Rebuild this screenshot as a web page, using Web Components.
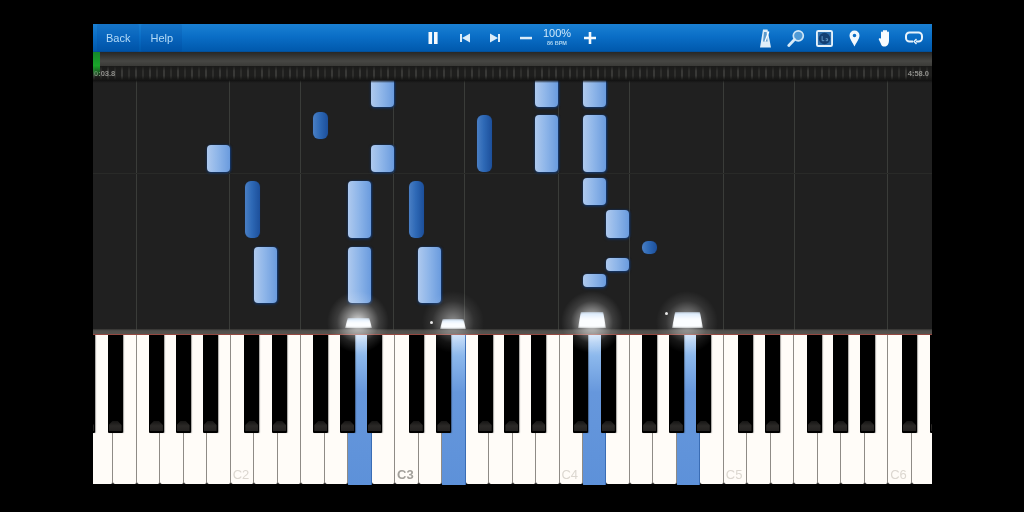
<!doctype html>
<html>
<head>
<meta charset="utf-8">
<style>
  html, body { margin:0; height:100%; background:#000; overflow:hidden; }
  body { padding:24px 92px 0 93px; box-sizing:border-box; font-family:"Liberation Sans", Arial, sans-serif; }
</style>
</head>
<body>
<synth-app>
  <synth-toolbar></synth-toolbar>
  <synth-timeline start="0:03.8" end="4:58.0"></synth-timeline>
  <note-roll></note-roll>
  <piano-keys></piano-keys>
</synth-app>
<script>
// key geometry, px relative to the app's left edge
const WHITE_W = 23.49;
const FIRST_WHITE = -3.2;
const OCTAVE = 164.4;
const C2_X = 137;
// x, strength of the light above each sounding key (page px)
const GLOWS = [[358, .85], [453, .5], [592, .85], [687, .6]];
const glowFill = (a) => `radial-gradient(closest-side, rgba(255,255,255,${a}), rgba(255,255,255,${a * .55}) 35%, rgba(255,255,255,${a * .15}) 68%, transparent)`;

class SynthApp extends HTMLElement {
  constructor() {
    super();
    this.attachShadow({ mode: 'open' });
    this.shadowRoot.innerHTML = `
      <style>
        :host { display:flex; flex-direction:column; width:839px; height:461px; overflow:hidden; filter:blur(.5px); }
      </style>
      <slot></slot>`;
  }
}
customElements.define('synth-app', SynthApp);

class SynthToolbar extends HTMLElement {
  constructor() {
    super();
    this.attachShadow({ mode: 'open' });
    this.shadowRoot.innerHTML = `
      <style>
        :host { display:grid; grid-template-columns:1fr auto 1fr; align-items:center; height:28px; flex:none;
          background:linear-gradient(#1a80d3, #0a6ec6 45%, #0059ad 96%, #064a8c); color:#fff; }
        .left { display:flex; gap:2px; padding-left:4px; height:28px; }
        .btn { display:flex; align-items:center; padding:0 9px; font-size:11px; color:#b4dbf7; background:rgba(0,50,130,.13); border-radius:2px; }
        .center { display:flex; align-items:center; height:28px; margin-left:-2px; }
        .center svg { display:block; }
        .tempo { display:flex; flex-direction:column; align-items:center; width:38px; line-height:1; margin-top:-1px; }
        .pct { font-size:11px; color:#cfe8fa; }
        .bpm { font-size:5.500px; font-weight:bold; color:#a9d2ef; margin-top:2px; }
        .right { display:flex; justify-content:flex-end; align-items:center; padding-right:3px; }
        .ico { width:30px; height:28px; display:flex; align-items:center; justify-content:center; }
        .ico svg { display:block; }
      </style>
      <div class="left"><div class="btn">Back</div><div class="btn">Help</div></div>
      <div class="center">
        <svg width="24" height="28" viewBox="0 0 24 28" style="margin-right:8px"><path d="M7.500 8h3.600v12H7.500zM13 8h3.600v12H13z" fill="#f4f9fd"/></svg>
        <svg width="24" height="28" viewBox="0 0 24 28" style="margin-right:6px"><path d="M7 10h2v8H7zM9 14l8-4.500v9z" fill="#dcecf8"/></svg>
        <svg width="24" height="28" viewBox="0 0 24 28" style="margin-right:7px"><path d="M17 10h-2v8h2zM15 14L7 9.500v9z" fill="#dcecf8"/></svg>
        <svg width="24" height="28" viewBox="0 0 24 28"><path d="M6 12.800h12v2.500H6z" fill="#dcecf8"/></svg>
        <div class="tempo"><span class="pct">100%</span><span class="bpm">86 BPM</span></div>
        <svg width="24" height="28" viewBox="0 0 24 28" style="margin-left:2px"><path d="M10.700 8h2.600v4.700H18v2.600h-4.700V20h-2.600v-4.700H6v-2.600h4.700z" fill="#f4f9fd"/></svg>
      </div>
      <div class="right">
        <div class="ico"><svg width="13" height="19" viewBox="0 0 13 19" style="margin-left:2px"><path d="M4 .5h4.500l3.500 18H1z" fill="#dfeef8"/><path d="M5 3h2.600l1 9.500H4z" fill="#5c9bce"/><path d="M6 12.500L9.800 2.500" stroke="#fff" stroke-width="1.300"/></svg></div>
        <div class="ico"><svg width="18" height="19" viewBox="0 0 18 19" fill="none" style="margin-left:3px"><circle cx="11.300" cy="6.800" r="5" fill="#4f9ad6" stroke="#cfe6f6" stroke-width="1.700"/><path d="M7.500 10.500L1.800 16.500" stroke="#d6eaf8" stroke-width="2.800" stroke-linecap="round"/></svg></div>
        <div class="ico"><svg width="17" height="17" viewBox="0 0 18 18"><rect x="1" y="1" width="16" height="16" rx="1.500" fill="#2d6fae" stroke="#e4f1fa" stroke-width="2"/><circle cx="9" cy="9" r="6" fill="#123f73"/><path d="M6.500 6.500v4.800h2.300M10.300 9.300h2v2h-2" fill="none" stroke="#6ea6d3" stroke-width=".9"/></svg></div>
        <div class="ico"><svg width="11" height="17" viewBox="0 0 11 17"><path fill-rule="evenodd" d="M5.500.5A5 5 0 0 1 10.500 5.500C10.500 9 7 13 5.500 16.500 4 13 .5 9 .5 5.500A5 5 0 0 1 5.500.5zM5.500 3.700a1.800 1.800 0 1 0 0 3.600 1.800 1.800 0 0 0 0-3.600z" fill="#f4f9fd"/></svg></div>
        <div class="ico"><svg width="14" height="18" viewBox="0 0 14 18" style="margin-left:1px"><path d="M3 9V3.500a1 1 0 0 1 2 0V2a1 1 0 0 1 2 0v0a1 1 0 0 1 2 0v1.500a1 1 0 0 1 2 0V11c0 4-1.500 6.500-4.500 6.500S3.500 16 2.500 14L.8 10.500c-.5-1 1-1.800 1.600-.8z" fill="#f7fbfe"/></svg></div>
        <div class="ico"><svg width="18" height="14" viewBox="0 0 18 14" fill="none" stroke="#e8f3fb" stroke-width="2"><path d="M8 10.500H4.500A3.500 3.500 0 0 1 1 7V5a3.500 3.500 0 0 1 3.500-3.500h9A3.500 3.500 0 0 1 17 5v2a3.500 3.500 0 0 1-3.500 3.500H11"/><path d="M11.500 8L9 10.500 11.500 13" stroke-width="1.400"/></svg></div>
      </div>`;
  }
}
customElements.define('synth-toolbar', SynthToolbar);

class SynthTimeline extends HTMLElement {
  constructor() {
    super();
    this.attachShadow({ mode: 'open' });
  }
  connectedCallback() {
    const start = this.getAttribute('start');
    const end = this.getAttribute('end');
    this.shadowRoot.innerHTML = `
      <style>
        :host { display:block; position:relative; height:28px; flex:none; background:#111; }
        .bar { height:14px; background:linear-gradient(#272726, #474744 65%, #3a3a37); }
        .ticks { display:flex; justify-content:space-between; align-items:center; height:14px; padding:0 3px 0 1px; font-size:7.500px; font-weight:bold; color:#8e8e8a;
          background:linear-gradient(#1a1a19, rgba(20,20,19,0) 35%, rgba(20,20,19,0) 70%, #151514),
            repeating-linear-gradient(90deg, #393937 0 2px, #1e1e1d 2px 7px, #2f2f2d 7px 9px, #1e1e1d 9px 14px); }
        .played { position:absolute; left:0; top:0; width:7px; height:25px; background:linear-gradient(#15862a, #19a62a 55%, rgba(24,130,40,0)); }
      </style>
      <div class="bar"></div>
      <div class="ticks"><span>${start}</span><span>${end}</span></div>
      <div class="played"></div>`;
  }
}
customElements.define('synth-timeline', SynthTimeline);

class FallingNote extends HTMLElement {
  constructor() {
    super();
    this.attachShadow({ mode: 'open' });
    this.shadowRoot.innerHTML = `
      <style>
        :host { display:block; position:absolute; box-sizing:border-box; border-radius:4px;
          background:linear-gradient(90deg, #aec9ee, #8fb6e9 45%, #6a9bde); box-shadow:0 1px 3px #12376f, 1px 0 2px #12376f; }
        :host([sharp]) { border-radius:6px; background:linear-gradient(90deg, #4a7fc4, #2e69b6 45%, #1c4f9b); box-shadow:0 0 1px #16396f; }
      </style>`;
  }
}
customElements.define('falling-note', FallingNote);

class NoteRoll extends HTMLElement {
  constructor() {
    super();
    this.attachShadow({ mode: 'open' });
    // page coordinates: x, top, bottom, width (23 = white key, 15 = black key)
    const notes = [
      [371,78,107,23],[535,78,107,23],[583,78,107,23],[535,115,172,23],[583,115,172,23],
      [207,145,172,23],[371,145,172,23],[583,178,205,23],[606,210,238,23],[348,181,238,23],
      [348,247,303,23],[254,247,303,23],[418,247,303,23],[583,274,287,23],[606,258,271,23],
      [313,112,139,15],[477,115,172,15],[245,181,238,15],[409,181,238,15],[642,241,254,15]
    ];
    const lines = [136,229,300,393,464,558,629,723,794,887];
    // x, top, width, height
    const flares = [[345,318,27,10],[440,319,26,10],[578,312,28,16],[672,312,31,16]];
    const dots = [[430,321],[665,312]];
    this.shadowRoot.innerHTML = `
      <style>
        :host { display:block; position:relative; flex:none; height:255px; overflow:hidden; background:#202020; }
        .v { position:absolute; top:0; bottom:0; width:1px; background:#3a3c39; }
        .h { position:absolute; left:0; right:0; top:93px; height:1px; background:#292a28; }
        .glow { position:absolute; top:211px; width:62px; height:62px; margin-left:-31px; border-radius:50%; }
        .flare { position:absolute; background:linear-gradient(#d3e6fb, #fbfdff 45%); border-radius:5px 5px 0 0; filter:blur(.8px);
          clip-path:polygon(10% 0, 90% 0, 100% 100%, 0 100%); }
        .dot { position:absolute; width:3px; height:3px; border-radius:50%; background:#e8e8e8; }
        .floor { position:absolute; left:0; right:0; bottom:0; height:6px; background:linear-gradient(rgba(76,75,72,.4), #504e4b 30%, #55524e 75%, #b3433a); }
        .top { position:absolute; left:0; right:0; top:0; height:3px; background:linear-gradient(#111, transparent); }
      </style>
      ${lines.map((x) => `<div class="v" style="left:${x - 93}px"></div>`).join('')}
      <div class="h"></div>
      ${notes.map(([x, t, b, w]) => `<falling-note ${w < 20 ? 'sharp' : ''} style="left:${x - 93}px;top:${t - 80}px;height:${b - t}px;width:${w}px"></falling-note>`).join('')}
      <div class="top"></div>
      <div class="floor"></div>
      ${GLOWS.map(([x, a]) => `<div class="glow" style="left:${x - 93}px;background:${glowFill(a)}"></div>`).join('')}
      ${flares.map(([x, t, w, h]) => `<div class="flare" style="left:${x - 93}px;top:${t - 80}px;width:${w}px;height:${h}px"></div>`).join('')}
      ${dots.map(([x, t]) => `<div class="dot" style="left:${x - 93}px;top:${t - 80}px"></div>`).join('')}`;
  }
}
customElements.define('note-roll', NoteRoll);

class PianoKeys extends HTMLElement {
  constructor() {
    super();
    this.attachShadow({ mode: 'open' });
    const active = new Set([11, 15, 21, 25]);
    const labels = { 6: 'C2', 13: 'C3', 20: 'C4', 27: 'C5', 34: 'C6' };
    let whites = '';
    for (let i = 0; i < 37; i++) {
      whites += `<div class="w${active.has(i) ? ' on' : ''}">${labels[i] ? `<span class="${i === 13 ? 'dark' : ''}">${labels[i]}</span>` : ''}</div>`;
    }
    // black keys sit over the whites, repeated per octave from C
    const offs = [14.3, 42, 83.3, 110, 137];
    let blacks = '';
    for (let oct = -1; oct < 6; oct++) {
      for (const o of offs) {
        const x = C2_X + oct * OCTAVE + o;
        if (x > -16 && x < 839) blacks += `<div class="b" style="left:${x.toFixed(1)}px"></div>`;
      }
    }
    this.shadowRoot.innerHTML = `
      <style>
        :host { display:block; position:relative; flex:none; height:151px; overflow:hidden; background:#000; font-family:"Liberation Sans", Arial, sans-serif; }
        .row { display:flex; margin-left:${FIRST_WHITE}px; }
        .w { flex:none; height:149px; width:${WHITE_W}px; box-sizing:border-box; border-right:1.500px solid #8f8b86; background:#fffcf8; border-radius:0 0 2px 2px; display:flex; align-items:flex-end; justify-content:center; }
        .w.on { height:151px; background:linear-gradient(#c4dcf8, #8cb8ec 14%, #6697dc 38%, #5d91d9); border-right-color:#3a6db5; }
        .w span { font-size:13px; color:#dcd7d0; margin-bottom:2px; margin-right:2px; }
        .w span.dark { color:#a3a09b; font-weight:bold; }
        .b { position:absolute; top:0; width:15px; height:98px; background:#000; border-radius:0 0 1px 1px; box-shadow:1px 0 1px rgba(0,0,0,.35); }
        .b::after { content:""; position:absolute; left:1px; right:1px; bottom:2px; height:10px; background:linear-gradient(#161514, #2b2927 50%, #232120); clip-path:polygon(30% 0, 70% 0, 100% 40%, 100% 100%, 0 100%, 0 40%); }
        .glow { position:absolute; top:-44px; width:62px; height:62px; margin-left:-31px; border-radius:50%; }
      </style>
      <div class="row">${whites}</div>
      ${blacks}
      ${GLOWS.map(([x, a]) => `<div class="glow" style="left:${x - 93}px;background:${glowFill(a)}"></div>`).join('')}`;
  }
}
customElements.define('piano-keys', PianoKeys);
</script>
</body>
</html>
